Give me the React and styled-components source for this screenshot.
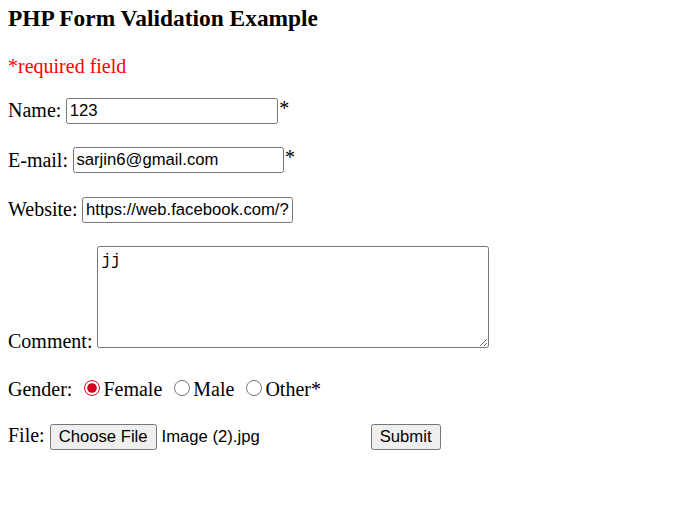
import React from "react";
import styled, { createGlobalStyle } from "styled-components";

const GlobalStyle = createGlobalStyle`
    body {
        margin: 0;
        background: #ffffff;
        color: #000000;
        font-family: "Liberation Serif", "Times New Roman", serif;
        font-size: 20px;
    }
`;

const Page = styled.div`
    padding: 5px 8px;
`;

const Title = styled.h3`
    margin: 0;
    font-size: 23.4px;
    line-height: 27px;
    font-weight: bold;
`;

const Required = styled.p`
    margin: 23px 0 0 0;
    line-height: 23px;
    color: #ff0000;
`;

const Form = styled.form`
    display: flex;
    flex-direction: column;
    align-items: flex-start;
`;

const Row = styled.div`
    display: flex;
    align-items: ${(p) => p.$align || "center"};
    margin-top: ${(p) => p.$top ?? 23.5}px;
    line-height: 23px;
`;

const Label = styled.span`
    margin-right: ${(p) => p.$space ?? 5}px;
    margin-bottom: ${(p) => p.$drop || 0}px;
`;

const TextInput = styled.input`
    box-sizing: border-box;
    width: ${(p) => p.$width || 212}px;
    height: 26px;
    margin: 0;
    padding: 1px 2.5px;
    border: 1px solid #767676;
    border-radius: 2.5px;
    font-family: "Liberation Sans", Arial, sans-serif;
    font-size: 16.67px;
    color: #000000;
    background: #ffffff;
    outline: none;
`;

const Star = styled.span`
    align-self: flex-start;
    line-height: 20px;
    margin-left: 1px;
`;

const Comment = styled.textarea`
    box-sizing: border-box;
    width: 392px;
    height: 102px;
    margin: 0;
    padding: 5px 2.5px 2.5px 3px;
    border: 1px solid #767676;
    border-radius: 2.5px;
    font-family: "Liberation Mono", "Courier New", monospace;
    font-size: 16px;
    line-height: 18px;
    color: #000000;
    outline: none;
`;

const Option = styled.label`
    display: flex;
    align-items: baseline;
`;

const Radio = styled.input`
    width: 16px;
    height: 16px;
    margin: 3.75px 3.75px 0 11.25px;
    accent-color: #d2001e;
`;

const FileBox = styled.div`
    display: flex;
    align-items: baseline;
    width: 316px;
    margin-right: 5px;
`;

const Button = styled.button`
    box-sizing: border-box;
    height: 26px;
    margin: 0;
    padding: 1px 8px;
    border: 1px solid #767676;
    border-radius: 2.5px;
    background: #efefef;
    color: #000000;
    font-family: "Liberation Sans", Arial, sans-serif;
    font-size: 16.67px;
`;

const FileName = styled.span`
    margin-left: 5px;
    font-family: "Liberation Sans", Arial, sans-serif;
    font-size: 16.67px;
`;

export default function App() {
    return (
        <Page>
            <GlobalStyle />
            <Title>PHP Form Validation Example</Title>
            <Required>*required field</Required>
            <Form onSubmit={(e) => e.preventDefault()}>
                <Row $top={19.5}>
                    <Label>Name:</Label>
                    <TextInput type="text" defaultValue="123" />
                    <Star>*</Star>
                </Row>
                <Row>
                    <Label>E-mail:</Label>
                    <TextInput type="text" $width={211} defaultValue="sarjin6@gmail.com" />
                    <Star>*</Star>
                </Row>
                <Row>
                    <Label>Website:</Label>
                    <TextInput type="text" $width={211} defaultValue="https://web.facebook.com/?" />
                </Row>
                <Row $align="flex-end" $top={23.2}>
                    <Label $drop={-5}>Comment:</Label>
                    <Comment defaultValue="jj" />
                </Row>
                <Row $align="baseline" $top={28.25}>
                    <Label $space={0}>Gender:</Label>
                    <Option>
                        <Radio type="radio" name="gender" defaultChecked />
                        Female
                    </Option>
                    <Option>
                        <Radio type="radio" name="gender" />
                        Male
                    </Option>
                    <Option>
                        <Radio type="radio" name="gender" />
                        Other*
                    </Option>
                </Row>
                <Row $align="baseline" $top={23.25}>
                    <Label>File:</Label>
                    <FileBox>
                        <Button type="button">Choose File</Button>
                        <FileName>Image (2).jpg</FileName>
                    </FileBox>
                    <Button type="submit">Submit</Button>
                </Row>
            </Form>
        </Page>
    );
}
